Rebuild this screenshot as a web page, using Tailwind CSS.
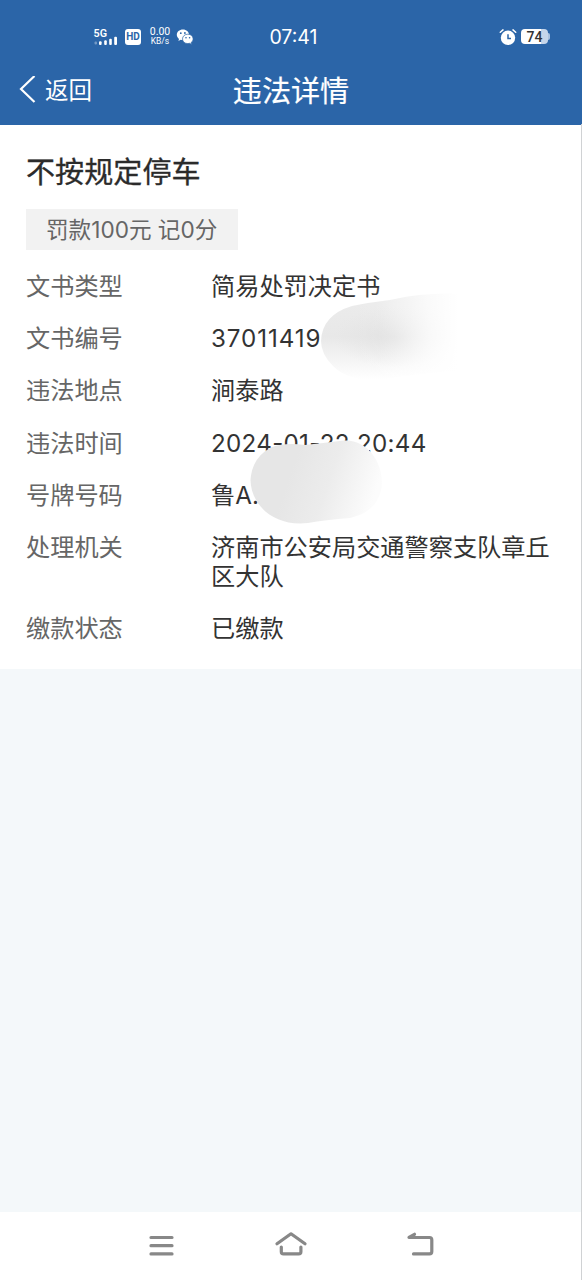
<!DOCTYPE html>
<html lang="zh-CN">
<head>
<meta charset="UTF-8">
<meta name="viewport" content="width=device-width, initial-scale=1">
<title>违法详情</title>
<script src="https://cdn.jsdelivr.net/npm/@tailwindcss/browser@4"></script>
</head>
<body class="w-[582px] h-[1280px] overflow-hidden bg-[#f4f8fa] font-['Inter','Noto_Sans_CJK_SC',sans-serif] text-[#333]">
<div class="relative flex flex-col h-full">
  <header class="h-[124.5px] shrink-0 bg-[#2b65a8] text-white">
    <!-- status bar -->
    <div class="grid grid-cols-[1fr_60px_1fr] items-center h-[73px]">
      <div class="flex items-center pl-[93px]">
        <svg class="w-[26px] h-[20px]" viewBox="0 0 26 20" fill="white">
          <text x="0.5" y="9.5" font-size="11" font-weight="600" font-family="Roboto, sans-serif" textLength="13.5" lengthAdjust="spacingAndGlyphs">5G</text>
          <rect x="1.5" y="14.500" width="2.5" height="3" rx="1" opacity=".35"/>
          <rect x="6" y="14.2" width="2.6" height="3.8" rx="1"/>
          <rect x="11.2" y="13.2" width="2.6" height="4.8" rx="1"/>
          <rect x="16.2" y="11.8" width="2.6" height="6.2" rx="1"/>
          <rect x="21.2" y="9.8" width="2.8" height="8.2" rx="1"/>
        </svg>
        <span class="ml-[6px] flex items-center justify-center w-4 h-4 rounded-[3px] bg-white text-[#2b65a8] text-[10px] leading-none font-bold font-[Roboto]">HD</span>
        <span class="ml-[8px] w-[22px] flex flex-col items-center font-[Roboto] text-[10.500px] leading-[10px]"><span>0.00</span><span class="text-[8.500px] leading-[9px]">KB/s</span></span>
        <svg class="ml-[5px] w-[18px] h-[18px]" viewBox="0 0 18 18">
          <path fill="white" d="M7 1.5C3.3 1.5.8 3.8.8 6.8c0 1.8.9 3.1 2.2 4.1L2.4 13l2.3-1.2c.8.2 1.5.3 2.3.3C10.700 12 13 9.700 13 6.800 13 3.800 10.300 1.500 7 1.500Z"/>
          <path fill="white" stroke="#2b65a8" stroke-width=".7" d="M11.800 6.200c-3 0-5.300 2-5.300 4.700s2.300 4.700 5.300 4.700c.6 0 1.200-.1 1.800-.3l2 1.100-.5-1.800c1.300-.9 2-2.200 2-3.700 0-2.700-2.300-4.700-5.300-4.700Z"/>
          <circle cx="4.800" cy="5.200" r=".9" fill="#2b65a8"/><circle cx="8.900" cy="5" r=".9" fill="#2b65a8"/>
          <circle cx="10" cy="9.700" r=".8" fill="#2b65a8"/><circle cx="13.600" cy="9.700" r=".8" fill="#2b65a8"/>
        </svg>
      </div>
      <div class="text-center text-[19.5px] pl-[5px] pt-[3px] whitespace-nowrap">07:41</div>
      <div class="flex items-center justify-end pr-[32px] gap-[4px]">
        <svg class="w-[18px] h-[18px]" viewBox="0 0 18 18" fill="none">
          <circle cx="9" cy="9.800" r="7.200" fill="white"/>
          <path d="M1.300 4.200 4 1.900M16.700 4.200 14 1.900" stroke="white" stroke-width="1.500" stroke-linecap="round"/>
          <path d="M9 6.200v4.300h3" stroke="#2b65a8" stroke-width="1.500"/>
        </svg>
        <span class="flex items-center">
          <span class="flex items-center justify-center w-[27px] h-[15px] rounded-[4px] bg-linear-to-r from-white from-74% to-[#c5d5ea] to-76% text-[#333] text-[14px] leading-none font-medium font-[Roboto]">74</span>
          <span class="w-[2px] h-[7px] rounded-r-sm bg-[#a9c1df]"></span>
        </span>
      </div>
    </div>
    <!-- navigation -->
    <div class="grid grid-cols-[1fr_auto_1fr] items-center h-[36px]">
      <div class="flex items-center pl-[18px]">
        <svg class="w-[20px] h-[30px]" viewBox="0 0 20 30" fill="none" stroke="white" stroke-width="2.200"><path d="M16.500 0 3 13 16.500 26"/></svg>
        <span class="ml-[7px] text-[23.500px] leading-[34px]">返回</span>
      </div>
      <h1 class="pt-px text-[29.100px] leading-[34px] [-webkit-text-stroke:0.2px_white]">违法详情</h1>
    </div>
  </header>

  <main class="h-[544.5px] shrink-0 bg-white pl-[26px] pr-[30px] pt-[30px]">
    <h2 class="text-[29.100px] leading-[36px] text-[#2b2b2b] [-webkit-text-stroke:0.300px_#2b2b2b]">不按规定停车</h2>
    <div class="mt-[18px] w-[212px] h-[41px] bg-[#f2f2f2] pl-5 text-[22.600px] leading-[41px] text-[#666] whitespace-nowrap">罚款100元 记0分</div>
    <dl class="mt-[22.5px] grid grid-cols-[185px_1fr] gap-y-[23.200px] text-[24.200px] leading-[29px] whitespace-nowrap [&>dt]:text-[#666]">
      <dt>文书类型</dt><dd>简易处罚决定书</dd>
      <dt>文书编号</dt><dd class="tracking-[0.9px]">37011419</dd>
      <dt>违法地点</dt><dd>涧泰路</dd>
      <dt>违法时间</dt><dd class="tracking-[0.28px]">2024-01-22 20:44</dd>
      <dt>号牌号码</dt><dd>鲁A.</dd>
      <dt>处理机关</dt><dd>济南市公安局交通警察支队章丘<br>区大队</dd>
      <dt>缴款状态</dt><dd>已缴款</dd>
    </dl>
  </main>

  <div class="flex-1"></div>

  <nav class="h-[68px] shrink-0 bg-white flex items-center">
    <svg class="w-full h-[68px]" viewBox="0 0.500 582 68" fill="none" stroke="#888" stroke-width="3.200" stroke-linecap="round" stroke-linejoin="round">
      <path d="M151 26h21M151 34.200h21M151 42.400h21"/>
      <path d="M277 32.300 291 22.300 305 32.300M281.300 35.500v4.700q0 2.200 2.200 2.200h15.200q2.200 0 2.200-2.200v-4.700"/>
      <path d="M414.500 22.800 409 26h20.500q2.300 0 2.300 2.300v11.800q0 2.300-2.300 2.300H413.500"/>
    </svg>
  </nav>

  <!-- redaction smudges over the private values -->
  <svg class="absolute left-0 top-0 w-[582px] h-[680px] pointer-events-none" viewBox="0 0 582 680">
    <defs>
      <linearGradient id="a" x1="0" y1="0" x2="0" y2="1">
        <stop offset="0" stop-color="#ececec"/><stop offset=".5" stop-color="#e8e8e8"/><stop offset="1" stop-color="#fff"/>
      </linearGradient>
      <linearGradient id="fade" gradientUnits="userSpaceOnUse" x1="352" y1="335" x2="458" y2="335">
        <stop offset="0" stop-color="#fff" stop-opacity="0"/><stop offset=".25" stop-color="#fff" stop-opacity=".08"/><stop offset=".72" stop-color="#fff" stop-opacity=".75"/><stop offset="1" stop-color="#fff"/>
      </linearGradient>
      <radialGradient id="core"><stop offset="0" stop-color="#dcdcdc" stop-opacity=".8"/><stop offset="1" stop-color="#e4e4e4" stop-opacity="0"/></radialGradient>
      <linearGradient id="b" gradientUnits="userSpaceOnUse" x1="290" y1="475" x2="372" y2="503">
        <stop offset="0" stop-color="#e6e6e6"/><stop offset=".45" stop-color="#ececec"/><stop offset="1" stop-color="#fcfcfc"/>
      </linearGradient>
    </defs>
    <path fill="url(#a)" d="M352 306Q372 302 390 300Q425 292 465 294V370Q410 374 385 379Q350 383 333 366Q321 354 321 341Q322 315 352 306Z"/>
    <ellipse cx="395" cy="337" rx="62" ry="30" fill="url(#core)"/>
    <path fill="url(#fade)" d="M352 288H470V386H352Z"/>
    <path fill="url(#b)" d="M272 447Q286 442 305 445Q322 443 344 440.500C365 439 382 459 382 483C381 503 368 514 350 518Q325 520 308 523C275 527 251 506 250.500 480Q252 457 272 447Z"/>
  </svg>
  <div class="absolute right-0 top-[124px] w-px h-[1156px] bg-[#d0d2d4]"></div>
</div>
</body>
</html>
